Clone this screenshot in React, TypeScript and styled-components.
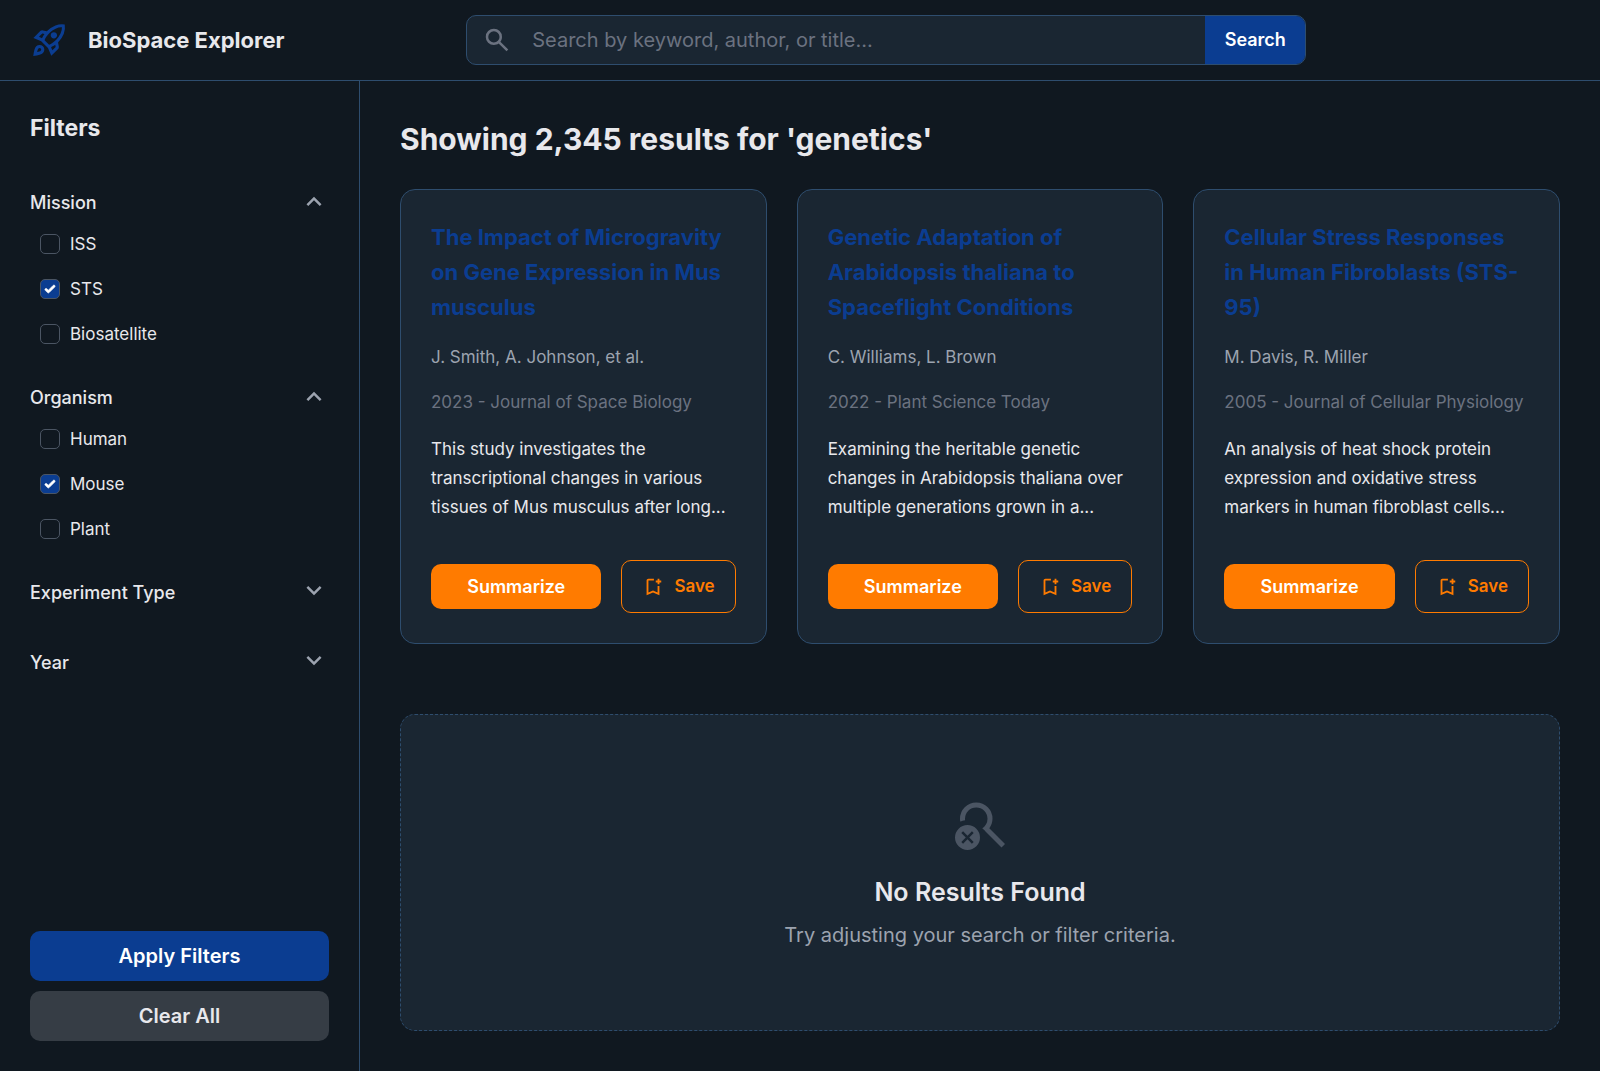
import React, { useState } from "react";
import styled, { createGlobalStyle } from "styled-components";

const color = {
  page: "#101820",
  surface: "#1a2632",
  line: "#2e4d6e",
  primary: "#0b3d91",
  accent: "#ff7b00",
  text: "#e8e8ec",
  muted: "#9ca3af",
  dim: "#6b7280",
  faint: "#4b5563",
  neutral: "#363d45",
};

const tick =
  "url(\"data:image/svg+xml,%3Csvg viewBox='0 0 16 16' fill='white' xmlns='http://www.w3.org/2000/svg'%3E%3Cpath stroke='white' stroke-width='.6' d='M12.207 4.793a1 1 0 010 1.414l-5 5a1 1 0 01-1.414 0l-2-2a1 1 0 011.414-1.414L6.5 9.086l4.293-4.293a1 1 0 011.414 0z'/%3E%3C/svg%3E\")";

const GlobalStyle = createGlobalStyle`
  *, *::before, *::after { box-sizing: border-box; }
  body {
    margin: 0;
    background: ${color.page};
    color: ${color.text};
    font-family: Inter, "Noto Sans", sans-serif;
    font-size: 20px;
    line-height: 30px;
  }
  h1, h2, h3, p, ul { margin: 0; padding: 0; }
  button, input { font: inherit; color: inherit; }
  button { border: 0; cursor: pointer; }
`;

const paths = {
  rocket:
    "m226-559 78 33q14-28 29-54t33-52l-56-11-84 84Zm142 83 114 113q42-16 90-49t90-75q70-70 109.5-155.5T806-800q-72-5-158 34.5T492-656q-42 42-75 90t-49 90Zm178-65q-23-23-23-56.5t23-56.5q23-23 57-23t57 23q23 23 23 56.5T660-541q-23 23-57 23t-57-23Zm19 321 84-84-11-56q-26 18-52 32.5T532-299l33 79Zm313-653q19 121-23.5 235.5T708-419l20 99q4 20-2 39t-20 33L538-80l-84-197-171-171-197-84 167-168q14-14 33.5-20t39.5-2l99 20q104-104 218-147t235-24ZM157-321q35-35 85.5-35.5T328-322q35 35 34.5 85.5T327-151q-25 25-83.5 43T82-76q14-103 32-161.5t43-83.5Zm57 56q-10 10-20 36.5T180-175q27-4 53.5-13.5T270-208q12-12 13-29t-11-29q-12-12-29-11.5T214-265Z",
  search:
    "M784-120 532-372q-30 24-69 38t-83 14q-109 0-184.5-75.5T120-580q0-109 75.5-184.5T380-840q109 0 184.5 75.5T640-580q0 44-14 83t-38 69l252 252-56 56ZM380-400q75 0 127.5-52.5T560-580q0-75-52.5-127.5T380-760q-75 0-127.5 52.5T200-580q0 75 52.5 127.5T380-400Z",
  expand: "M480-344 240-584l56-56 184 184 184-184 56 56-240 240Z",
  bookmarkAdd:
    "M200-120v-640q0-33 23.5-56.5T280-840h240v80H280v518l200-86 200 86v-278h80v400L480-240 200-120Zm480-480v-80h-80v-80h80v-80h80v80h80v80h-80v80h-80Z",
  searchOff:
    "M280-80q-83 0-141.5-58.5T80-280q0-83 58.5-141.5T280-480q83 0 141.5 58.5T480-280q0 83-58.5 141.5T280-80Zm544-40L568-376q-12-13-25.5-26.5T516-428q38-24 61-64t23-88q0-75-52.5-127.5T420-760q-75 0-127.5 52.5T240-580q0 6 .5 11.5T242-557q-18 2-39.5 8T164-535q-2-11-3-22t-1-23q0-109 75.5-184.5T420-840q109 0 184.5 75.5T680-580q0 43-13.5 81.5T629-428l251 252-56 56Zm-615-61 71-71 70 71 29-28-71-71 71-71-28-28-71 71-71-71-28 28 71 71-71 71 28 28Z",
};

const Svg = styled.svg<{ $size: number; $color?: string }>`
  flex: none;
  display: block;
  width: ${(p) => p.$size}px;
  height: ${(p) => p.$size}px;
  fill: ${(p) => p.$color ?? "currentColor"};
`;

function Icon({ name, size, tint }: { name: keyof typeof paths; size: number; tint?: string }) {
  return (
    <Svg viewBox="0 -960 960 960" $size={size} $color={tint} aria-hidden="true">
      <path d={paths[name]} />
    </Svg>
  );
}

const Page = styled.div`
  display: flex;
  flex-direction: column;
  min-height: 100vh;
`;

const Header = styled.header`
  display: flex;
  align-items: center;
  padding: 15px 112px 15px 30px;
  border-bottom: 1px solid ${color.line};
`;

const Brand = styled.div`
  display: flex;
  align-items: center;
  gap: 20px;
`;

const BrandName = styled.h2`
  font-size: 22px;
  line-height: 28px;
  font-weight: 700;
`;

const SearchArea = styled.div`
  flex: 1;
  display: flex;
  justify-content: center;
`;

const SearchForm = styled.form`
  display: flex;
  align-items: stretch;
  width: 100%;
  max-width: 840px;
  height: 50px;
  overflow: hidden;
  border: 1px solid ${color.line};
  border-radius: 10px;
  background: ${color.surface};
`;

const SearchLabel = styled.label`
  display: flex;
  align-items: center;
  padding-left: 15px;
`;

const SearchInput = styled.input`
  flex: 1;
  min-width: 0;
  padding: 0 20px;
  border: 0;
  outline: 0;
  background: transparent;
  &::placeholder { color: ${color.dim}; opacity: 1; }
`;

const SearchButton = styled.button`
  min-width: 100px;
  padding: 0 18px;
  background: ${color.primary};
  color: #fff;
  font-size: 18px;
  font-weight: 600;
`;

const Body = styled.div`
  flex: 1;
  display: flex;
`;

const Sidebar = styled.aside`
  flex: none;
  display: flex;
  flex-direction: column;
  justify-content: space-between;
  width: 360px;
  padding: 30px;
  border-right: 1px solid ${color.line};
`;

const SidebarTitle = styled.h2`
  margin-bottom: 30px;
  font-size: 23px;
  line-height: 35px;
  font-weight: 700;
`;

const Groups = styled.div`
  display: flex;
  flex-direction: column;
  gap: 20px;
`;

const Group = styled.details`
  &[open] > summary svg { transform: rotate(180deg); }
`;

const GroupHead = styled.summary`
  display: flex;
  align-items: flex-end;
  justify-content: space-between;
  padding: 10px 0;
  list-style: none;
  cursor: pointer;
  font-size: 18px;
  line-height: 26px;
  font-weight: 500;
  &::-webkit-details-marker { display: none; }
`;

const Options = styled.div`
  display: flex;
  flex-direction: column;
  gap: 10px;
  padding-left: 10px;
`;

const Option = styled.label`
  display: flex;
  align-items: center;
  gap: 10px;
  height: 35px;
  font-size: 17px;
`;

const Checkbox = styled.input`
  appearance: none;
  flex: none;
  width: 20px;
  height: 20px;
  margin: 0;
  border: 1px solid ${color.faint};
  border-radius: 5px;
  background: transparent center / 100% no-repeat;
  &:checked {
    background-color: ${color.primary};
    background-image: ${tick};
  }
`;

const SidebarActions = styled.div`
  display: flex;
  flex-direction: column;
  gap: 10px;
`;

const SidebarButton = styled.button<{ $primary?: boolean }>`
  padding: 10px 20px;
  border-radius: 10px;
  background: ${(p) => (p.$primary ? color.primary : color.neutral)};
  color: ${(p) => (p.$primary ? "#fff" : color.text)};
  font-weight: 600;
`;

const Main = styled.main`
  flex: 1;
  min-width: 0;
  padding: 40px;
`;

const ResultsTitle = styled.h1`
  margin-bottom: 32px;
  font-size: 30px;
  line-height: 36px;
  font-weight: 700;
`;

const Cards = styled.div`
  display: grid;
  grid-template-columns: repeat(3, minmax(0, 1fr));
  gap: 30px;
`;

const Card = styled.article`
  display: flex;
  flex-direction: column;
  gap: 20px;
  padding: 30px;
  border: 1px solid ${color.line};
  border-radius: 15px;
  background: ${color.surface};
`;

const CardTitle = styled.h3`
  color: ${color.primary};
  font-size: 22px;
  line-height: 35px;
  font-weight: 700;
`;

const CardMeta = styled.p<{ $dim?: boolean }>`
  color: ${(p) => (p.$dim ? color.dim : color.muted)};
  font-size: 17px;
  line-height: 25px;
`;

const Abstract = styled.p`
  font-size: 17px;
  line-height: 29px;
`;

const CardActions = styled.div`
  display: flex;
  align-items: center;
  gap: 20px;
  margin-top: auto;
  padding-top: 18px;
`;

const SummarizeButton = styled.button`
  flex: 1;
  padding: 10px 20px;
  border-radius: 10px;
  background: ${color.accent};
  color: #fff;
  font-size: 18px;
  line-height: 25px;
  font-weight: 600;
`;

const SaveButton = styled.button`
  display: flex;
  align-items: center;
  gap: 10px;
  padding: 13px 20px;
  border: 1px solid ${color.accent};
  border-radius: 10px;
  background: transparent;
  color: ${color.accent};
  font-size: 17px;
  line-height: 25px;
  font-weight: 600;
`;

const Empty = styled.section`
  display: flex;
  flex-direction: column;
  align-items: center;
  margin-top: 70px;
  padding: 80px 40px;
  border: 1px dashed ${color.line};
  border-radius: 15px;
  background: ${color.surface};
  text-align: center;
`;

const EmptyTitle = styled.h3`
  margin: 20px 0 10px;
  font-size: 25px;
  line-height: 35px;
  font-weight: 600;
`;

const EmptyText = styled.p`
  color: ${color.muted};
`;

const filters = [
  { title: "Mission", options: ["ISS", "STS", "Biosatellite"] },
  { title: "Organism", options: ["Human", "Mouse", "Plant"] },
  { title: "Experiment Type", options: [] },
  { title: "Year", options: [] },
];

const papers = [
  {
    title: "The Impact of Microgravity on Gene Expression in Mus musculus",
    authors: "J. Smith, A. Johnson, et al.",
    source: "2023 - Journal of Space Biology",
    abstract:
      "This study investigates the transcriptional changes in various tissues of Mus musculus after long...",
  },
  {
    title: "Genetic Adaptation of Arabidopsis thaliana to Spaceflight Conditions",
    authors: "C. Williams, L. Brown",
    source: "2022 - Plant Science Today",
    abstract:
      "Examining the heritable genetic changes in Arabidopsis thaliana over multiple generations grown in a...",
  },
  {
    title: "Cellular Stress Responses in Human Fibroblasts (STS-95)",
    authors: "M. Davis, R. Miller",
    source: "2005 - Journal of Cellular Physiology",
    abstract:
      "An analysis of heat shock protein expression and oxidative stress markers in human fibroblast cells...",
  },
];

export default function App() {
  const [query, setQuery] = useState("");
  const [selected, setSelected] = useState<string[]>(["STS", "Mouse"]);

  const toggle = (name: string) =>
    setSelected((list) => (list.includes(name) ? list.filter((n) => n !== name) : [...list, name]));

  return (
    <Page>
      <GlobalStyle />
      <Header>
        <Brand>
          <Icon name="rocket" size={38} tint={color.primary} />
          <BrandName>BioSpace Explorer</BrandName>
        </Brand>
        <SearchArea>
          <SearchForm role="search" onSubmit={(e) => e.preventDefault()}>
            <SearchLabel htmlFor="query" aria-label="Search">
              <Icon name="search" size={30} tint={color.dim} />
            </SearchLabel>
            <SearchInput
              id="query"
              type="text"
              placeholder="Search by keyword, author, or title..."
              value={query}
              onChange={(e) => setQuery(e.target.value)}
            />
            <SearchButton type="submit">Search</SearchButton>
          </SearchForm>
        </SearchArea>
      </Header>
      <Body>
        <Sidebar>
          <div>
            <SidebarTitle>Filters</SidebarTitle>
            <Groups>
              {filters.map((group) => (
                <Group key={group.title} open={group.options.length > 0}>
                  <GroupHead>
                    {group.title}
                    <Icon name="expand" size={30} tint={color.muted} />
                  </GroupHead>
                  <Options>
                    {group.options.map((name) => (
                      <Option key={name}>
                        <Checkbox
                          type="checkbox"
                          checked={selected.includes(name)}
                          onChange={() => toggle(name)}
                        />
                        {name}
                      </Option>
                    ))}
                  </Options>
                </Group>
              ))}
            </Groups>
          </div>
          <SidebarActions>
            <SidebarButton type="button" $primary>
              Apply Filters
            </SidebarButton>
            <SidebarButton type="button" onClick={() => setSelected([])}>
              Clear All
            </SidebarButton>
          </SidebarActions>
        </Sidebar>
        <Main>
          <ResultsTitle>Showing 2,345 results for 'genetics'</ResultsTitle>
          <Cards>
            {papers.map((paper) => (
              <Card key={paper.title}>
                <CardTitle>{paper.title}</CardTitle>
                <CardMeta>{paper.authors}</CardMeta>
                <CardMeta $dim>{paper.source}</CardMeta>
                <Abstract>{paper.abstract}</Abstract>
                <CardActions>
                  <SummarizeButton type="button">Summarize</SummarizeButton>
                  <SaveButton type="button">
                    <Icon name="bookmarkAdd" size={22} />
                    Save
                  </SaveButton>
                </CardActions>
              </Card>
            ))}
          </Cards>
          <Empty>
            <Icon name="searchOff" size={60} tint={color.faint} />
            <EmptyTitle>No Results Found</EmptyTitle>
            <EmptyText>Try adjusting your search or filter criteria.</EmptyText>
          </Empty>
        </Main>
      </Body>
    </Page>
  );
}
